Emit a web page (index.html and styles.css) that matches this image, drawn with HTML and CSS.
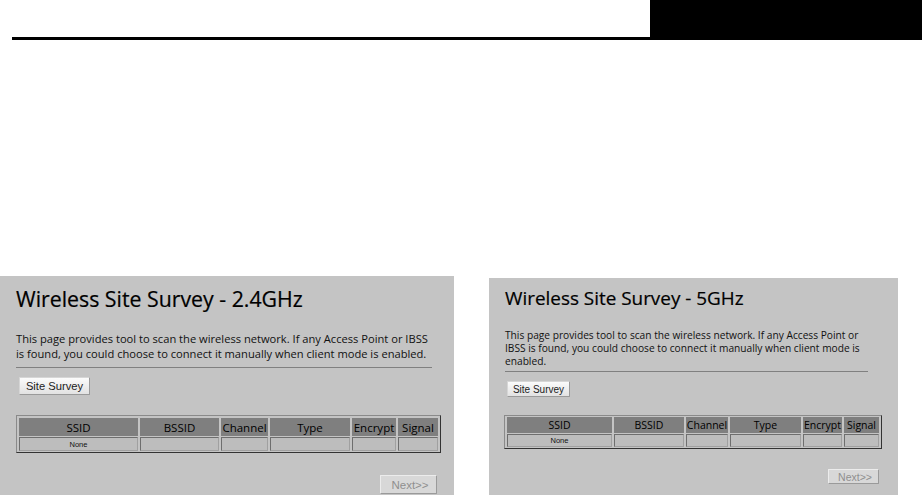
FILE: index.html
```html
<!DOCTYPE html>
<html>
	<head>
		<meta charset="UTF-8">
		<title>Wireless Site Survey</title>
		<link rel="stylesheet" href="styles.css">
	</head>
	<body>
		<div class="topBar">
			<div class="topRule"></div>
			<div class="topBlock"></div>
		</div>
		<div class="shots">
			<div class="panel panel24">
				<h1>Wireless Site Survey - 2.4GHz</h1>
				<p class="intro">This page provides tool to scan the wireless network. If any Access Point or IBSS<br>is found, you could choose to connect it manually when client mode is enabled.</p>
				<div class="rule"></div>
				<input type="button" class="btn survey" value="Site Survey" />
				<table class="list">
					<tr>
						<th class="c1">SSID</th>
						<th class="c2">BSSID</th>
						<th class="c3">Channel</th>
						<th class="c4">Type</th>
						<th class="c5">Encrypt</th>
						<th class="c6">Signal</th>
					</tr>
					<tr>
						<td class="none">None</td>
						<td></td>
						<td></td>
						<td></td>
						<td></td>
						<td></td>
					</tr>
				</table>
				<div class="foot"><input type="button" class="btn next" value="Next>>" disabled /></div>
			</div>
			<div class="panel panel5">
				<h1>Wireless Site Survey - 5GHz</h1>
				<p class="intro">This page provides tool to scan the wireless network. If any Access Point or<br>IBSS is found, you could choose to connect it manually when client mode is<br>enabled.</p>
				<div class="rule"></div>
				<input type="button" class="btn survey" value="Site Survey" />
				<table class="list">
					<tr>
						<th class="c1">SSID</th>
						<th class="c2">BSSID</th>
						<th class="c3">Channel</th>
						<th class="c4">Type</th>
						<th class="c5">Encrypt</th>
						<th class="c6">Signal</th>
					</tr>
					<tr>
						<td class="none">None</td>
						<td></td>
						<td></td>
						<td></td>
						<td></td>
						<td></td>
					</tr>
				</table>
				<div class="foot"><input type="button" class="btn next" value="Next>>" disabled /></div>
			</div>
		</div>
	</body>
</html>
```

FILE: styles.css
```css
*{
	margin: 0px;
	padding: 0px;
	box-sizing: border-box;
}
body{
	width: 922px;
	height: 495px;
	overflow: hidden;
	background: #fff;
	font-family: "Open Sans", "Liberation Sans", sans-serif;
	color: #111;
}
.topBar{
	height: 40px;
	padding-left: 12px;
	display: flex;
	align-items: flex-end;
	position: relative;
}
.topRule{
	width: 100%;
	height: 3px;
	background: #000;
}
.topBlock{
	position: absolute;
	top: 0px;
	right: 0px;
	width: 272px;
	height: 37px;
	background: #000;
}
.shots{
	display: flex;
	align-items: flex-start;
}
.panel{
	background: #c4c4c4;
}
.panel24{
	width: 454px;
	height: 219px;
	margin-top: 236px;
	padding: 9px 0px 0px 16px;
}
.panel5{
	width: 409px;
	height: 217px;
	margin: 238px 0px 0px 35px;
	padding: 8px 0px 0px 16px;
}
.panel h1{
	font-weight: 400;
	white-space: nowrap;
	color: #000;
	-webkit-text-stroke: 0.2px #000;
}
.panel24 h1{
	font-size: 21.3px;
	line-height: 27px;
}
.panel5 h1{
	font-size: 18.9px;
	line-height: 24px;
}
.intro{
	white-space: nowrap;
	color: #111;
}
.panel24 .intro{
	margin-top: 19px;
	font-size: 11.15px;
	line-height: 15px;
}
.panel5 .intro{
	margin-top: 19px;
	font-size: 10.2px;
	line-height: 13px;
}
.rule{
	height: 1px;
	background: #808080;
}
.panel24 .rule{
	width: 416px;
	margin-top: 6px;
}
.panel5 .rule{
	width: 363px;
	margin-top: 3px;
}
.btn{
	display: block;
	font-family: "Liberation Sans", sans-serif;
	color: #222;
	background: linear-gradient(#fbfbfb, #e2e2e2);
	border: 1px solid #d6d6d6;
	border-right-color: #9a9a9a;
	border-bottom-color: #9a9a9a;
	border-radius: 1px;
}
.panel24 .survey{
	width: 71px;
	height: 18px;
	margin: 9px 0px 0px 3px;
	font-size: 11.2px;
}
.panel5 .survey{
	width: 63px;
	height: 16px;
	margin: 9px 0px 0px 2px;
	font-size: 10px;
}
.next{
	padding-left: 3px;
	color: #8f8f8f;
	background: #d8d8d8;
	border-color: #ececec;
	border-right-color: #9a9a9a;
	border-bottom-color: #9a9a9a;
}
.list{
	table-layout: fixed;
	border-collapse: separate;
	border-spacing: 2px 1px;
	border: 1px solid;
	border-color: #8a8a8a #333 #333 #8a8a8a;
}
.panel24 .list{
	width: 425px;
	margin-top: 20px;
	padding: 1px 0px 0px;
}
.panel5 .list{
	width: 378px;
	margin: 18px 0px 0px -1px;
}
.list th{
	background: #7f7f7f;
	font-weight: 400;
	color: #000;
	white-space: nowrap;
	overflow: hidden;
}
.panel24 .list th{
	height: 18px;
	font-size: 11.5px;
}
.panel5 .list th{
	height: 16px;
	font-size: 10.5px;
}
.list td{
	background: #bdbdbd;
	border: 1px solid;
	border-color: #6e6e6e #a0a0a0 #a0a0a0 #6e6e6e;
	text-align: center;
	font-family: "Liberation Sans", sans-serif;
}
.panel24 .list td{
	height: 14px;
	font-size: 7.5px;
}
.panel5 .list td{
	height: 13px;
	font-size: 7.5px;
}
.panel24 .c1{ width: 119px; }
.panel24 .c2{ width: 79px; }
.panel24 .c3{ width: 47px; }
.panel24 .c4{ width: 80px; }
.panel24 .c5{ width: 44px; }
.panel24 .c6{ width: 40px; }
.panel5 .c1{ width: 105px; }
.panel5 .c2{ width: 70px; }
.panel5 .c3{ width: 42px; }
.panel5 .c4{ width: 71px; }
.panel5 .c5{ width: 39px; }
.panel5 .c6{ width: 35px; }
.foot{
	display: flex;
}
.panel24 .foot{
	width: 421px;
	margin-top: 22px;
	justify-content: flex-end;
}
.panel24 .next{
	width: 57px;
	height: 19px;
	font-size: 11.5px;
}
.panel5 .foot{
	width: 374px;
	margin-top: 20px;
	justify-content: flex-end;
}
.panel5 .next{
	width: 51px;
	height: 15px;
	font-size: 10.5px;
}
```
